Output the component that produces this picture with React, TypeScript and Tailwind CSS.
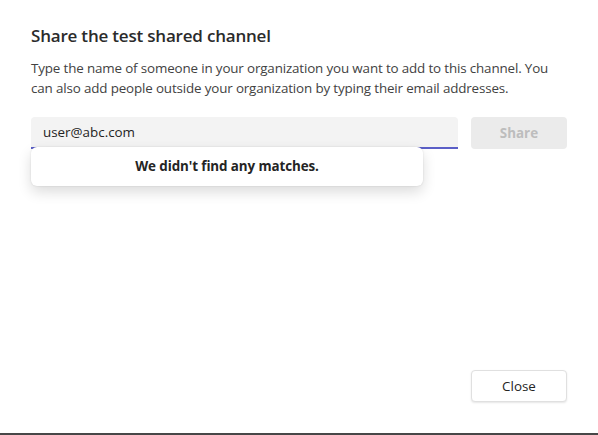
export default function App() {
  return (
    <div
      className="w-[598px] h-[435px] bg-white flex flex-col border-b-2 border-[#474747] text-[#242424]"
      style={{ fontFamily: '"Open Sans", "Noto Sans", sans-serif' }}
    >
      <div className="flex-1 px-[31px] pt-[24px]">
        <h1 className="text-[17px] leading-[24px] font-semibold tracking-[-0.2px] text-[#2b2b2b]">Share the test shared channel</h1>
        <p className="mt-[10px] text-[13.4px] leading-[20px] text-[#424242] tracking-[-0.15px]">
          Type the name of someone in your organization you want to add to this channel. You can also add people outside your organization by typing their email addresses.
        </p>
        <div className="mt-[19px] flex gap-[13px]">
          <div className="relative w-[427px]">
            <div className="h-[32px] bg-[#f3f3f3] rounded-t-[4px] border-b-2 border-[#5b5fc7] flex items-center px-[12px] text-[13.4px] text-[#242424]">
              user@abc.com
            </div>
            <div className="absolute left-0 top-[30px] w-[392px] h-[39px] bg-white rounded-[6px] shadow-[0_6px_14px_rgba(0,0,0,0.14),0_0_2px_rgba(0,0,0,0.12)] flex items-center justify-center text-[13.4px] font-bold text-[#242424] tracking-[-0.1px]">
              We didn't find any matches.
            </div>
          </div>
          <button className="w-[96px] h-[32px] rounded-[4px] bg-[#ebebeb] text-[13.4px] font-bold text-[#bdbdbd]">
            Share
          </button>
        </div>
      </div>
      <div className="flex justify-end px-[31px] pb-[31px]">
        <button className="w-[96px] h-[32px] rounded-[4px] bg-white border border-[#e0e0e0] shadow-[0_1px_2px_rgba(0,0,0,0.1)] text-[13.4px] font-medium text-[#242424]">
          Close
        </button>
      </div>
    </div>
  );
}
